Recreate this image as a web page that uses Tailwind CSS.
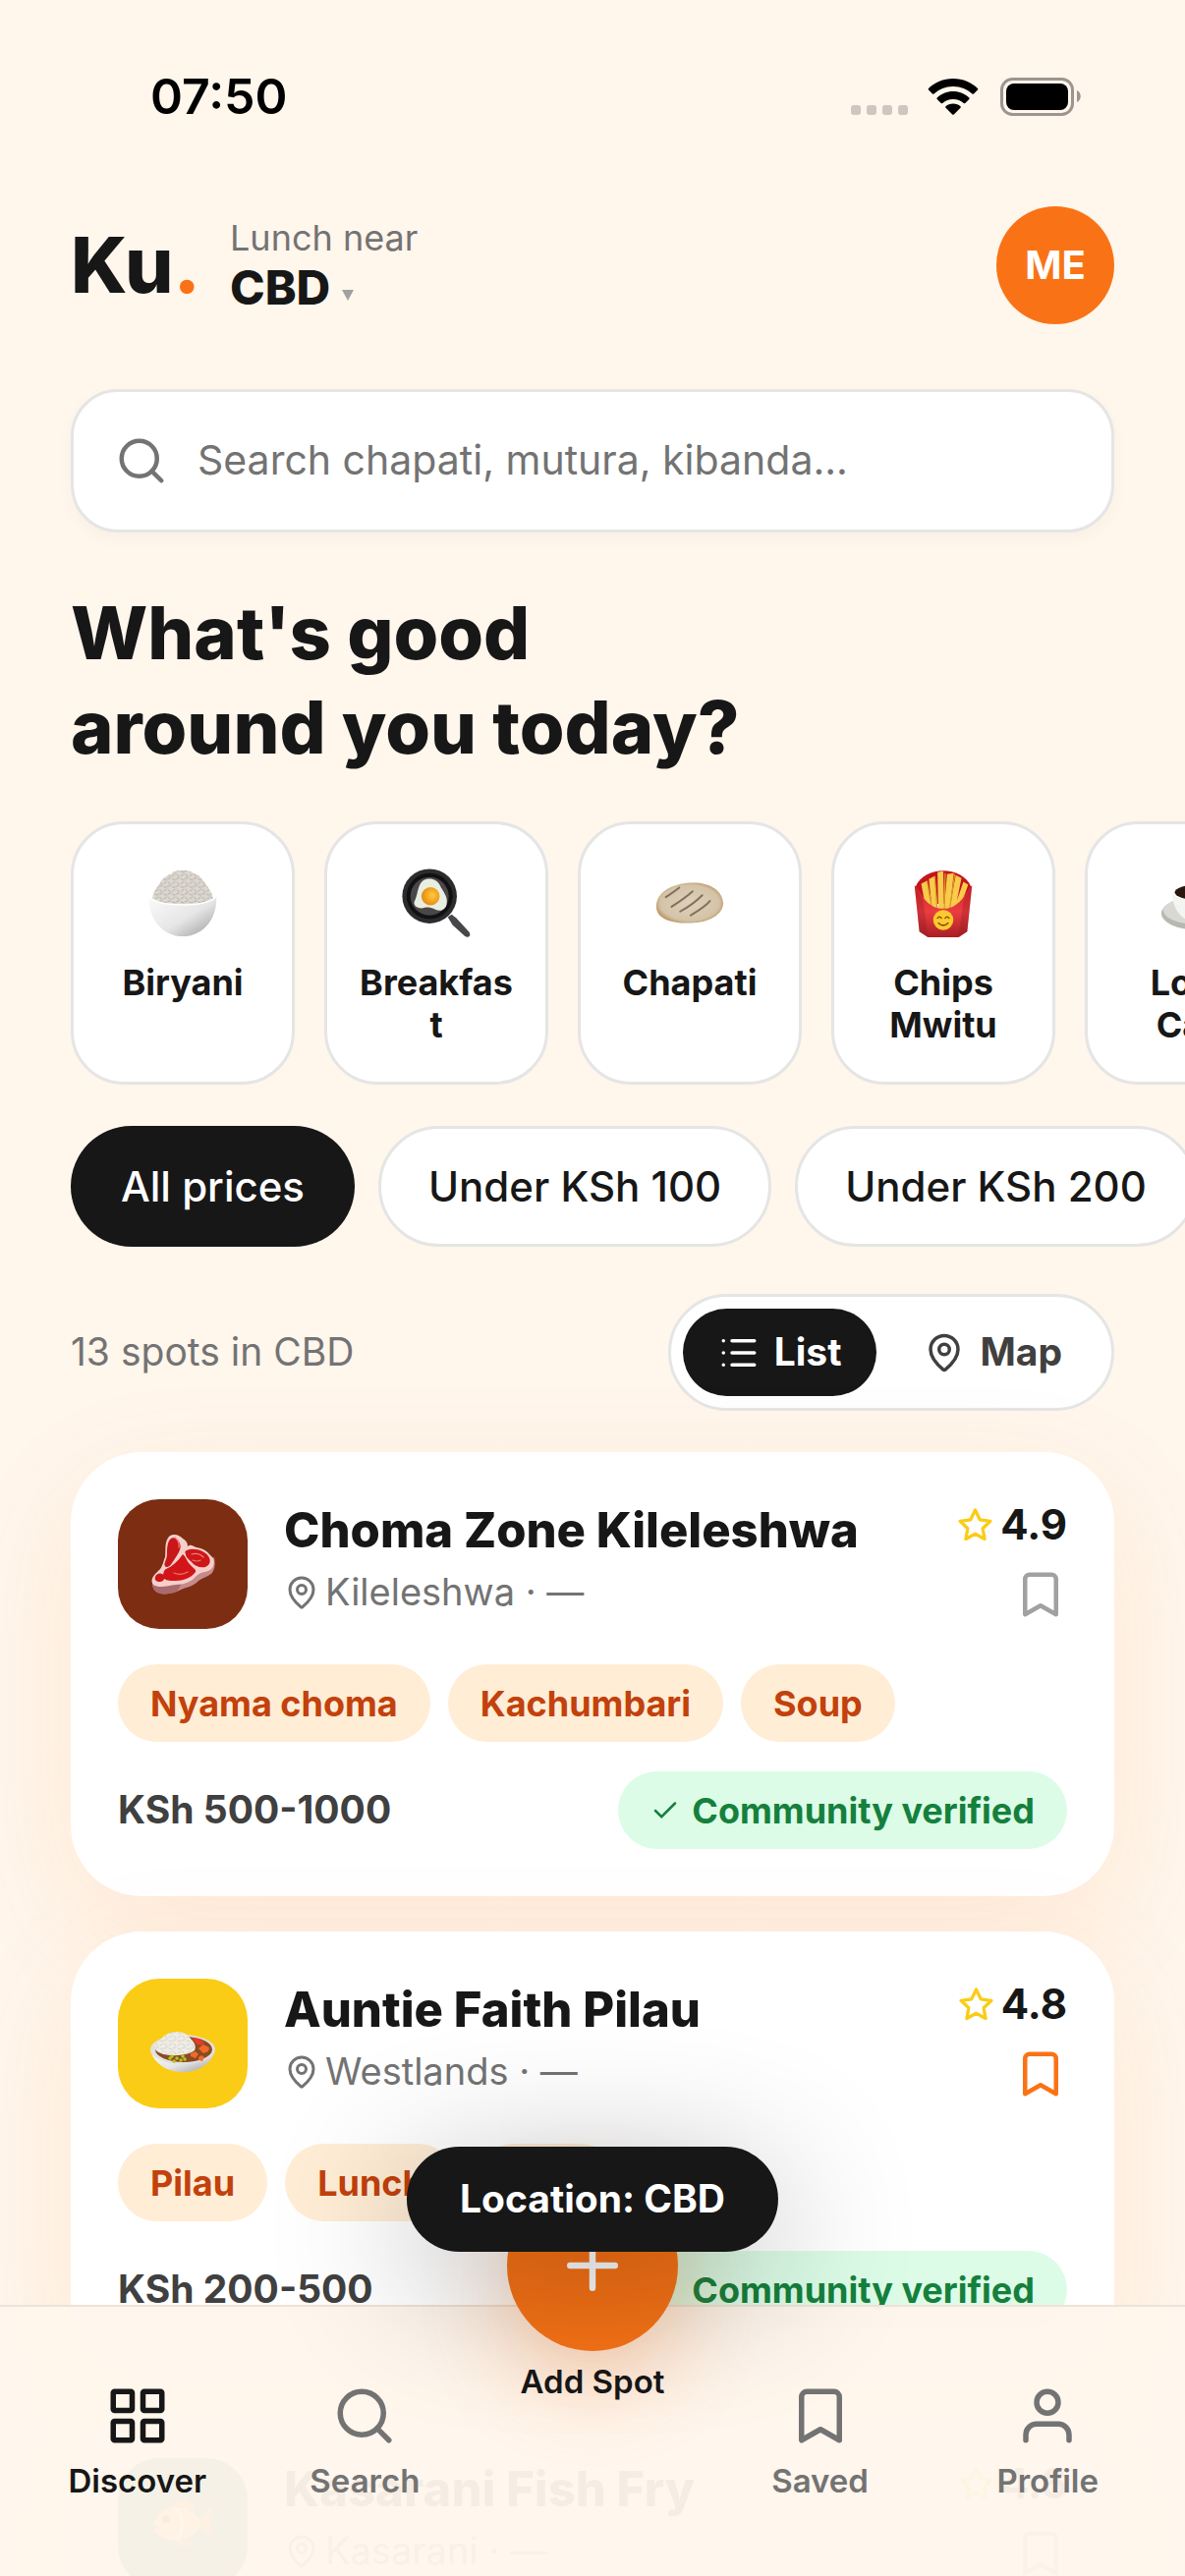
<!DOCTYPE html>
<html lang="en">
<head>
  <meta charset="UTF-8">
  <meta name="viewport" content="width=device-width, initial-scale=1.0">
  <title>Ku. - Discover</title>
  <script src="https://cdn.jsdelivr.net/npm/@tailwindcss/browser@4"></script>
</head>
<body class="relative h-screen overflow-hidden bg-[#fff6ec] font-['Inter','Roboto',sans-serif] text-neutral-900">

  <!-- Icon sprite -->
  <svg class="absolute size-0" aria-hidden="true">
    <defs>
      <linearGradient id="bowlFill" x1="0" y1="0" x2="1" y2="1">
        <stop offset="0" stop-color="#fbfbfb"/><stop offset="0.55" stop-color="#e6e6e6"/><stop offset="1" stop-color="#9b9b9b"/>
      </linearGradient>
      <radialGradient id="yolkFill" cx="0.6" cy="0.45" r="0.6">
        <stop offset="0" stop-color="#ffc93c"/><stop offset="1" stop-color="#e58a10"/>
      </radialGradient>
      <linearGradient id="boxFill" x1="0" y1="0" x2="0" y2="1">
        <stop offset="0" stop-color="#d8222a"/><stop offset="0.5" stop-color="#ea3d3f"/><stop offset="1" stop-color="#a81f26"/>
      </linearGradient>
      <radialGradient id="breadFill" cx="0.5" cy="0.5" r="0.55">
        <stop offset="0" stop-color="#ddd0bb"/><stop offset="0.8" stop-color="#d3c3a8"/><stop offset="1" stop-color="#b98f57"/>
      </radialGradient>
      <pattern id="grains" width="9" height="8" patternUnits="userSpaceOnUse">
        <path d="M1 3l3-2M6 1l2 3M1 6l3 1M5 6l3-1" stroke="#b3aca2" stroke-width="1" stroke-linecap="round"/>
      </pattern>
    </defs>
    <symbol id="i-search" viewBox="0 0 24 24"><circle cx="11" cy="11" r="8"/><path d="m21 21-4.3-4.3"/></symbol>
    <symbol id="i-pin" viewBox="0 0 24 24"><path d="M20 10c0 5-5.5 10.200-7.400 11.800a1 1 0 0 1-1.200 0C9.500 20.200 4 15 4 10a8 8 0 0 1 16 0"/><circle cx="12" cy="10" r="3"/></symbol>
    <symbol id="i-list" viewBox="0 0 24 24"><path d="M8 5h13M8 12h13M8 19h13M3 5h.01M3 12h.01M3 19h.01"/></symbol>
    <symbol id="i-star" viewBox="0 0 24 24"><path d="M12 2.500l2.900 6 6.600.9-4.800 4.600 1.200 6.600-5.900-3.200-5.900 3.200 1.200-6.600-4.800-4.600 6.600-.9z"/></symbol>
    <symbol id="i-bookmark" viewBox="0 0 24 24"><path d="m19 21-7-4-7 4V5a2 2 0 0 1 2-2h10a2 2 0 0 1 2 2z"/></symbol>
    <symbol id="i-check" viewBox="0 0 24 24"><path d="M20 6 9 17l-5-5"/></symbol>
    <symbol id="i-grid" viewBox="0 0 24 24"><rect x="3" y="3" width="7" height="7" rx="0.500"/><rect x="14" y="3" width="7" height="7" rx="0.500"/><rect x="3" y="14" width="7" height="7" rx="0.500"/><rect x="14" y="14" width="7" height="7" rx="0.500"/></symbol>
    <symbol id="i-user" viewBox="0 0 24 24"><circle cx="12" cy="7" r="4"/><path d="M20 21v-2a4 4 0 0 0-4-4H8a4 4 0 0 0-4 4v2"/></symbol>
    <symbol id="i-plus" viewBox="0 0 24 24"><path d="M5 12h14M12 5v14"/></symbol>

    <!-- Food pictures -->
    <symbol id="f-rice" viewBox="0 0 78 78">
      <path d="M7 36C8 25 14 22 17 15c4-4 8-5 12-8 6-3 16-3 21 1 6 1 9 6 12 10 4 6 8 10 9 18l-8 6H15z" fill="#dcd8d1"/>
      <path d="M7 36C8 25 14 22 17 15c4-4 8-5 12-8 6-3 16-3 21 1 6 1 9 6 12 10 4 6 8 10 9 18l-8 6H15z" fill="url(#grains)"/>
      <path d="M4 31c1 6 15 10 35 10s34-4 35-10c2 22-12 43-35 43S2 53 4 31z" fill="url(#bowlFill)"/>
      <path d="M4 31c1 6 15 10 35 10s34-4 35-10" fill="none" stroke="#fff" stroke-width="1.500"/>
    </symbol>
    <symbol id="f-pan" viewBox="0 0 78 78">
      <path d="M51 54l4-3 5 4 13 14c3 4 0 7-4 5L56 62z" fill="#47474b"/>
      <circle cx="32" cy="32" r="28.500" fill="#2c2c2e"/>
      <circle cx="32" cy="32" r="24" fill="#111113"/>
      <circle cx="32" cy="32" r="20" fill="#4b4648"/>
      <path d="M25 16c6-4 15-2 18 5 3 6 8 11 7 18 0 6-6 10-12 7-4-2-6-3-11-2-7 2-12-2-11-6 4-7 3-17 9-22z" fill="#e9eee2"/>
      <circle cx="33" cy="32" r="9.500" fill="url(#yolkFill)"/>
    </symbol>
    <symbol id="f-flatbread" viewBox="0 0 78 78">
      <path d="M4 43C4 28 20 19 40 18c18-1 33 7 34 21 0 12-15 21-34 21C20 61 4 55 4 43z" fill="url(#breadFill)"/>
      <path d="M14 33c6-4 9-6 14-10M20 43c8-5 14-9 22-16M29 48c9-5 16-10 23-17M40 52c8-5 15-9 20-15" stroke="#65523f" stroke-width="2" stroke-linecap="round" fill="none" opacity=".75"/>
    </symbol>
    <symbol id="f-fries" viewBox="0 0 78 78">
      <path d="M10 22C20 0 58 0 68 22l-8 18H18z" fill="#c3151d"/>
      <path d="M16 19l6-3 7 36h-7zM24 14l6-3 4 42h-6zM33 7l6-1 1 48h-6zM43 9l7-1-5 46h-6zM52 10l6 3-8 40h-6zM60 17l5 3-12 34-5-2z" fill="#f8cb4a"/>
      <path d="M30 11l3 39M41 8l-1 43M51 9l-6 41M22 16l6 34" stroke="#d99a25" stroke-width="1.300"/>
      <path d="M9 21c5 2 10 24 30 24s25-22 30-24l-5 48-9 6H23l-9-6z" fill="url(#boxFill)"/>
      <path d="M9 21l9 16 5 38-9-6zM69 21l-9 16-5 38 9-6z" fill="#8c1a20" opacity=".3"/>
      <circle cx="39" cy="57" r="10.500" fill="#fdca2e"/>
      <path d="M33 55q2-3 4 0M41 55q2-3 4 0M34 60q5 5 10 0" stroke="#7c4a10" stroke-width="1.500" fill="none" stroke-linecap="round"/>
    </symbol>
    <symbol id="f-coffee" viewBox="0 0 78 78">
      <ellipse cx="38" cy="50" rx="36" ry="17" fill="#b8b8b3"/>
      <ellipse cx="38" cy="47" rx="34" ry="14" fill="#d9d9d4"/>
      <path d="M13 25c0 20 9 34 27 34s27-14 27-34z" fill="#f4f4f1"/>
      <ellipse cx="40" cy="27" rx="27" ry="10" fill="#fff"/>
      <ellipse cx="40" cy="28" rx="24" ry="8" fill="#2a1710"/>
    </symbol>
    <symbol id="f-steak" viewBox="0 0 66 66">
      <path d="M2 49c0 6 0 12 8 14 4 1 12 0 17-2 9-5 14-4 20-9 5-6 15-6 17-12 2-4 2-8 1-14z" fill="#c68a8a"/>
      <path d="M2 49c0 6 0 12 8 14 4 1 12 0 17-2l5-8z" fill="#a86a6c"/>
      <path d="M19 5c5-4 11-1 14 2 3 2 5 4 5 8 3-3 6 0 9 1 6 1 10 3 14 8 4 3 5 8 2 13-4 5-11 3-16 8-5 6-13 9-21 9-8 1-17 4-23 0-4-5 1-10 5-14 5-4 5-10 7-14 1-8-1-15 4-21z" fill="#f6cfca"/>
      <path d="M20 8c4-4 8 0 10 4 2 5-1 9-4 14-3 4-6 11-10 10-4-2 1-7 1-13 0-5 0-11 3-15z" fill="#c91618"/>
      <path d="M37 19c7-3 18 0 22 6 3 4 2 9-3 11-6 1-11-1-14-5-3-3-6-5-6-8-1-2-1-3 1-4z" fill="#cd1719"/>
      <path d="M33 23c3 2 4 7 7 10 3 4 7 5 6 8-4 6-13 9-20 9-6 0-13 0-13-5 0-3 1-6 3-7 7-3 12-8 17-15z" fill="#d21518"/>
      <path d="M5 46c1-4 7-5 9-1 1 3-1 6-4 6-4 0-6-2-5-5z" fill="#c91618"/>
      <path d="M25 6q5 4 4 10M42 23q7-2 12 3M43 29q5 2 8 0M24 42q7 3 14-1" stroke="#ee7a72" stroke-width="1.200" fill="none" stroke-linecap="round"/>
    </symbol>
    <symbol id="f-curry" viewBox="0 0 66 66">
      <path d="M0 39c3 15 18 23 33 23s30-8 33-23z" fill="url(#bowlFill)"/>
      <ellipse cx="33" cy="39" rx="33" ry="15" fill="#e2e1dd"/>
      <ellipse cx="34" cy="39" rx="29" ry="13" fill="#8a4a22"/>
      <path d="M5 39c-1-6 4-8 7-12 4-4 9-6 15-6 7 0 11 3 14 7 4 4 6 8 4 12-6 6-34 8-40-1z" fill="#efece6"/>
      <path d="M5 39c-1-6 4-8 7-12 4-4 9-6 15-6 7 0 11 3 14 7 4 4 6 8 4 12-6 6-34 8-40-1z" fill="url(#grains)" opacity=".4"/>
      <path d="M42 27l8 1 5 4-2 3-6-1z" fill="#e33a2c"/>
      <path d="M49 38l5-4 6 3-1 4-5 2zM41 43l5-2 3 3-3 4-5-2zM49 47l3-2 3 2-2 4-4-1z" fill="#ee6a2b"/>
      <path d="M20 48h.1M24 51h.1M27 48h.1M31 50h.1M33 46h.1M22 46h.1M35 49h.1" stroke="#b4c41e" stroke-width="3.500" stroke-linecap="round"/>
    </symbol>
    <symbol id="f-fish" viewBox="0 0 66 66">
      <path d="M22 14c8-9 20-6 24 6zM24 50c6 8 14 8 18 2z" fill="#e0762b"/>
      <path d="M48 32l14-16c2 8 0 12-2 17 2 6 3 10 2 16z" fill="#e0762b"/>
      <path d="M3 34c6-14 18-20 29-17 11 2 18 10 20 16-4 10-12 17-22 18C18 52 8 46 3 40l5-3z" fill="#f7a350"/>
      <path d="M27 18c8 10 6 24 0 33" stroke="#fff" stroke-width="3" fill="none"/>
      <circle cx="16" cy="29" r="4" fill="#222"/>
    </symbol>
  </svg>

  <main class="h-full overflow-y-auto [scrollbar-width:none]">

    <!-- Status bar -->
    <div class="flex h-[180px] items-center justify-between pt-[16px] pr-[106px] pl-[153px]">
      <span class="text-[50px] font-semibold text-black">07:50</span>
      <div class="flex items-center gap-[20px]">
        <div class="flex gap-[6px] pt-[27px]">
          <span class="size-[10px] rounded-[3px] bg-[#cfc6bf]"></span>
          <span class="size-[10px] rounded-[3px] bg-[#cfc6bf]"></span>
          <span class="size-[10px] rounded-[3px] bg-[#cfc6bf]"></span>
          <span class="size-[10px] rounded-[3px] bg-[#cfc6bf]"></span>
        </div>
        <svg class="h-[38px] w-[52px]" viewBox="0 0 52 38" aria-label="Wi-Fi">
          <path d="M26 1C36 1 45 5 51 11c.5.500.5 1 0 1.500l-4 4c-.4.400-1 .4-1.500 0A28 28 0 0 0 26 9 28 28 0 0 0 6.500 16.500c-.5.400-1.100.4-1.500 0l-4-4c-.5-.5-.5-1 0-1.500C7 5 16 1 26 1zM26 14c6.500 0 12 2.500 16.300 6.400.5.500.5 1 0 1.500l-4 4c-.5.500-1.100.500-1.600 0A16 16 0 0 0 26 22a16 16 0 0 0-10.700 3.900c-.5.500-1.100.500-1.600 0l-4-4c-.5-.5-.5-1 0-1.500C14 16.500 19.500 14 26 14zM26 26.500c3 0 5.600 1 7.500 2.700.5.500.4 1 0 1.500l-6.700 6.700c-.5.500-1 .5-1.600 0l-6.700-6.700c-.4-.5-.5-1 0-1.500 1.900-1.700 4.500-2.700 7.500-2.700z"/>
        </svg>
        <svg class="h-[39px] w-[84px]" viewBox="0 0 84 39" aria-label="Battery">
          <rect x="3.500" y="1.500" width="72" height="36" rx="11" fill="none" stroke="#9c958f" stroke-width="3"/>
          <rect x="8" y="6" width="63" height="27" rx="8"/>
          <path d="M80 13c5 2 5 10 0 12z" fill="#9c958f"/>
        </svg>
      </div>
    </div>

    <div class="px-[72px]">

      <!-- Header -->
      <header class="flex h-[180px] items-center justify-between">
        <div class="flex items-center gap-[30px]">
          <h1 class="text-[78px] leading-[90px] font-extrabold">Ku<span class="text-[#f97316]">.</span></h1>
          <button class="text-left">
            <span class="block text-[36px] leading-[45px] text-neutral-500">Lunch near</span>
            <span class="flex items-center gap-[12px] text-[48px] leading-[56px] font-extrabold">CBD
              <svg class="mt-[14px] size-[12px] text-neutral-400" viewBox="0 0 12 12" fill="currentColor"><path d="M0 1h12L6 12z"/></svg>
            </span>
          </button>
        </div>
        <button class="size-[120px] rounded-full bg-[#f97316] text-[40px] font-bold text-white">ME</button>
      </header>

      <!-- Search -->
      <label class="mt-[36px] flex h-[146px] items-center gap-[30px] rounded-[48px] border-3 border-neutral-200 bg-white px-[42px] shadow-[0_6px_18px_rgba(0,0,0,0.03)]">
        <svg class="size-[54px] shrink-0 fill-none stroke-neutral-500 stroke-2 [stroke-linecap:round]"><use href="#i-search"/></svg>
        <input type="search" aria-label="Search food" placeholder="Search chapati, mutura, kibanda..." class="w-full bg-transparent text-[41px] outline-none placeholder:text-neutral-500">
      </label>

      <h2 class="mt-[54px] text-[74px] leading-[96px] font-extrabold">What's good<br>around you today?</h2>
    </div>

    <!-- Categories -->
    <div id="categoryList" class="mt-[48px] flex gap-[30px] overflow-x-auto px-[72px] [scrollbar-width:none]"></div>

    <!-- Price filter -->
    <div class="mt-[42px] flex gap-[24px] overflow-x-auto px-[72px] [scrollbar-width:none]">
      <button class="h-[123px] shrink-0 rounded-full bg-neutral-900 px-[51px] text-[42px] font-medium text-white">All prices</button>
      <button class="h-[123px] shrink-0 rounded-full border-3 border-neutral-200 bg-white px-[48px] text-[42px] font-medium">Under KSh 100</button>
      <button class="h-[123px] shrink-0 rounded-full border-3 border-neutral-200 bg-white px-[48px] text-[42px] font-medium">Under KSh 200</button>
      <button class="h-[123px] shrink-0 rounded-full border-3 border-neutral-200 bg-white px-[48px] text-[42px] font-medium">Under KSh 500</button>
    </div>

    <div class="px-[72px]">
      <div class="mt-[48px] flex items-center justify-between">
        <p class="text-[39px] text-neutral-500">13 spots in CBD</p>
        <div class="flex rounded-full border-3 border-neutral-200 bg-white p-[12px]">
          <button class="flex h-[89px] items-center gap-[15px] rounded-full bg-neutral-900 px-[36px] text-[39px] font-bold text-white">
            <svg class="size-[42px] fill-none stroke-current stroke-2 [stroke-linecap:round]"><use href="#i-list"/></svg>List
          </button>
          <button class="flex h-[89px] items-center gap-[15px] rounded-full pr-[38px] pl-[48px] text-[39px] font-bold text-neutral-700">
            <svg class="size-[42px] fill-none stroke-current stroke-2 [stroke-linecap:round]"><use href="#i-pin"/></svg>Map
          </button>
        </div>
      </div>

      <!-- Spots -->
      <div id="spotList" class="mt-[42px] flex flex-col gap-[36px] pb-[320px]"></div>
    </div>
  </main>

  <!-- Bottom navigation -->
  <nav class="absolute inset-x-0 bottom-0 grid h-[276px] grid-cols-5 border-t-2 border-[#eee3d9] bg-[#fff6ec]/96 px-[24px] text-[33px] leading-[42px] font-semibold text-neutral-500">
    <a href="#" class="flex flex-col items-center gap-[12px] pt-[78px] text-neutral-900">
      <svg class="size-[66px] fill-none stroke-current stroke-2 [stroke-linejoin:round]"><use href="#i-grid"/></svg>Discover
    </a>
    <a href="#" class="flex flex-col items-center gap-[12px] pt-[78px]">
      <svg class="size-[66px] fill-none stroke-current stroke-2 [stroke-linecap:round]"><use href="#i-search"/></svg>Search
    </a>
    <a href="#" class="-mt-[129px] flex flex-col items-center gap-[10px] text-neutral-900">
      <span class="flex size-[174px] items-center justify-center rounded-full bg-[#f97316] text-white shadow-[0_30px_90px_rgba(249,115,22,0.3)]">
        <svg class="size-[78px] fill-none stroke-current stroke-2 [stroke-linecap:round]"><use href="#i-plus"/></svg>
      </span>Add Spot
    </a>
    <a href="#" class="flex flex-col items-center gap-[12px] pt-[78px]">
      <svg class="size-[66px] fill-none stroke-current stroke-2 [stroke-linejoin:round]"><use href="#i-bookmark"/></svg>Saved
    </a>
    <a href="#" class="flex flex-col items-center gap-[12px] pt-[78px]">
      <svg class="size-[66px] fill-none stroke-current stroke-2 [stroke-linecap:round]"><use href="#i-user"/></svg>Profile
    </a>
  </nav>

  <!-- Toast -->
  <div role="status" class="absolute bottom-[330px] left-1/2 flex h-[107px] -translate-x-1/2 items-center rounded-full bg-neutral-900 px-[54px] text-[39px] font-bold whitespace-nowrap text-white shadow-[0_30px_150px_rgba(0,0,0,0.3)]">Location: CBD</div>

  <script>
    const categories = [
      { name: 'Biryani', icon: 'f-rice' },
      { name: 'Breakfast', icon: 'f-pan' },
      { name: 'Chapati', icon: 'f-flatbread' },
      { name: 'Chips Mwitu', icon: 'f-fries' },
      { name: 'Local Cafe', icon: 'f-coffee' }
    ];

    const spots = [
      { name: 'Choma Zone Kileleshwa', area: 'Kileleshwa', rating: '4.9', icon: 'f-steak', color: 'bg-[#7c2d12]', saved: false, tags: ['Nyama choma', 'Kachumbari', 'Soup'], price: 'KSh 500-1000' },
      { name: 'Auntie Faith Pilau', area: 'Westlands', rating: '4.8', icon: 'f-curry', color: 'bg-[#facc15]', saved: true, tags: ['Pilau', 'Lunch', 'Beef'], price: 'KSh 200-500' },
      { name: 'Kasarani Fish Fry', area: 'Kasarani', rating: '4.6', icon: 'f-fish', color: 'bg-teal-700', saved: false, tags: ['Fish', 'Ugali'], price: 'KSh 200-500' }
    ];

    document.getElementById('categoryList').innerHTML = categories.map(item => `
      <button class="flex h-[268px] w-[228px] shrink-0 flex-col items-center gap-[22px] rounded-[54px] border-3 border-neutral-200 bg-white px-[30px] pt-[42px] text-[36px] leading-[43px] font-bold">
        <svg class="size-[76px] shrink-0"><use href="#${item.icon}"/></svg>
        <span class="w-full break-words">${item.name}</span>
      </button>
    `).join('');

    document.getElementById('spotList').innerHTML = spots.map(spot => `
      <article class="rounded-[72px] bg-white p-[48px] shadow-[0_36px_120px_rgba(249,115,22,0.1)]">
        <div class="flex h-[132px] gap-[37px]">
          <div class="flex size-[132px] shrink-0 items-center justify-center rounded-[42px] ${spot.color}">
            <svg class="size-[66px]"><use href="#${spot.icon}"/></svg>
          </div>
          <div class="grow">
            <h3 class="text-[49px] leading-[63px] font-extrabold">${spot.name}</h3>
            <p class="flex items-center gap-[6px] text-[38px] leading-[63px] text-neutral-500">
              <svg class="size-[36px] fill-none stroke-current stroke-2"><use href="#i-pin"/></svg>${spot.area} · —
            </p>
          </div>
          <div class="flex flex-col items-end gap-[18px]">
            <span class="flex items-center gap-[6px] text-[42px] leading-[52px] font-bold">
              <svg class="size-[39px] fill-none stroke-[#facc15] stroke-2 [stroke-linejoin:round]"><use href="#i-star"/></svg>${spot.rating}
            </span>
            <button aria-label="Save" class="${spot.saved ? 'text-[#f97316]' : 'text-neutral-400'}">
              <svg class="size-[54px] fill-none stroke-current stroke-2 [stroke-linejoin:round]"><use href="#i-bookmark"/></svg>
            </button>
          </div>
        </div>
        <div class="mt-[36px] flex gap-[18px]">
          ${spot.tags.map(tag => `<span class="flex h-[79px] items-center rounded-full bg-[#ffedd5] px-[33px] text-[36px] font-bold text-[#c2410c]">${tag}</span>`).join('')}
        </div>
        <div class="mt-[30px] flex items-center justify-between">
          <span class="text-[39px] font-bold text-neutral-700">${spot.price}</span>
          <span class="flex h-[79px] items-center gap-[12px] rounded-full bg-[#dcfce7] px-[33px] text-[36px] font-bold text-[#15803d]">
            <svg class="size-[30px] fill-none stroke-current stroke-2 [stroke-linecap:round]"><use href="#i-check"/></svg>Community verified
          </span>
        </div>
      </article>
    `).join('');
  </script>
</body>
</html>
